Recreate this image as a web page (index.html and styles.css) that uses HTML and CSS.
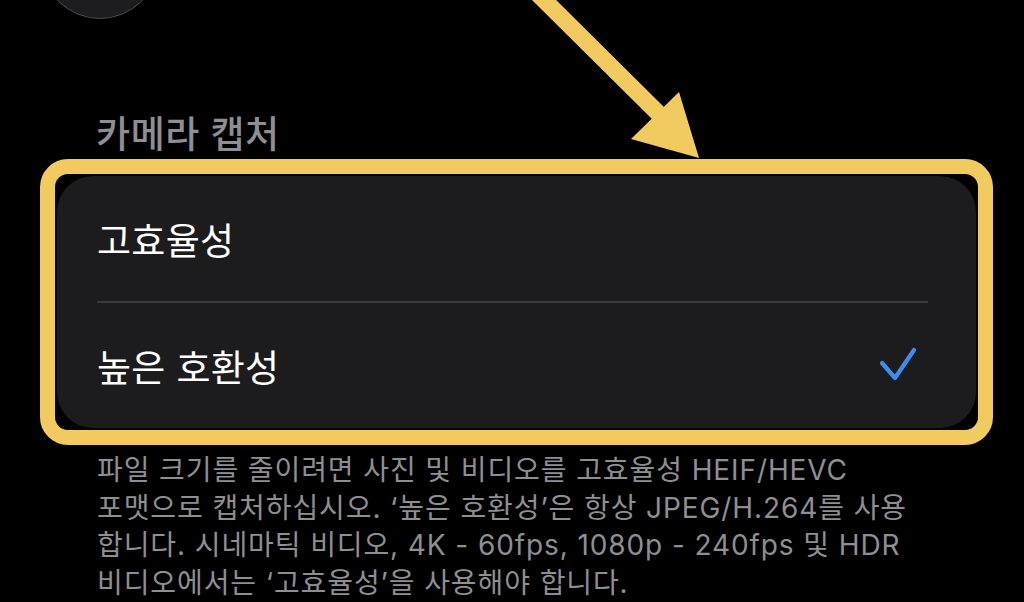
FILE: index.html
```html
<!DOCTYPE html>
<html lang="ko">
<head>
<meta charset="utf-8">
<link rel="stylesheet" href="styles.css">
</head>
<body>
<div class="screen">
  <div class="avatar"></div>
  <h2 class="section-title">카메라 캡처</h2>
  <div class="highlight">
    <div class="card">
      <div class="row"><span class="label">고효율성</span></div>
      <div class="divider"></div>
      <div class="row">
        <span class="label">높은 호환성</span>
        <svg class="check" width="40" height="40" viewBox="0 0 40 40"><path d="M3 17 L16 32 L35 4" fill="none" stroke="#3d8df0" stroke-width="4.2" stroke-linecap="round" stroke-linejoin="round"/></svg>
      </div>
    </div>
  </div>
  <p class="footer">파일 크기를 줄이려면 사진 및 비디오를 고효율성 HEIF/HEVC<br>포맷으로 캡처하십시오. ‘높은 호환성’은 항상 JPEG/H.264를 사용<br>합니다. 시네마틱 비디오, 4K - 60fps, 1080p - 240fps 및 HDR<br>비디오에서는 ‘고효율성’을 사용해야 합니다.</p>
  <svg class="arrow" width="1024" height="602" viewBox="0 0 1024 602">
    <line x1="536" y1="-8" x2="662" y2="117" stroke="#f1cb5f" stroke-width="17"/>
    <polygon points="631,139 679,92 699,158" fill="#f1cb5f"/>
  </svg>
</div>
</body>
</html>
```

FILE: styles.css
```css
html, body {
  margin: 0;
  padding: 0;
  background: #000;
}
.screen {
  position: relative;
  width: 1024px;
  height: 602px;
  overflow: hidden;
  background: #000;
  font-family: "Inter", "Noto Sans CJK KR", sans-serif;
  display: flex;
  flex-direction: column;
}
.avatar {
  width: 116px;
  height: 116px;
  border-radius: 50%;
  margin: -99px 0 0 41px;
  background: #1d1d1f;
  border: 1.5px solid #4a4a4c;
  flex: none;
}
.section-title {
  margin: 94px 0 0 96px;
  font-size: 37px;
  line-height: 44px;
  font-weight: 500;
  color: #8e8e93;
  letter-spacing: 0.6px;
}
.highlight {
  margin: 2px 0 0 40px;
  width: 919px;
  border: 15px solid #f1cb5f;
  border-radius: 28px;
  padding: 2px;
  background: #000;
}
.card {
  background: #1c1c1e;
  border-radius: 36px;
  padding: 0 48px 0 40px;
  display: flex;
  flex-direction: column;
}
.row {
  height: 125px;
  display: flex;
  align-items: center;
  justify-content: space-between;
}
.label {
  font-size: 37px;
  color: #fff;
  letter-spacing: 0.3px;
}
.divider {
  height: 2px;
  background: #3a3a3c;
}
.check {
  margin-right: 9px;
}
.footer {
  margin: 7px 0 0 97px;
  font-size: 28px;
  line-height: 37.7px;
  color: #8e8e93;
  letter-spacing: 0.9px;
}
.arrow {
  position: absolute;
  left: 0;
  top: 0;
  pointer-events: none;
}
```
